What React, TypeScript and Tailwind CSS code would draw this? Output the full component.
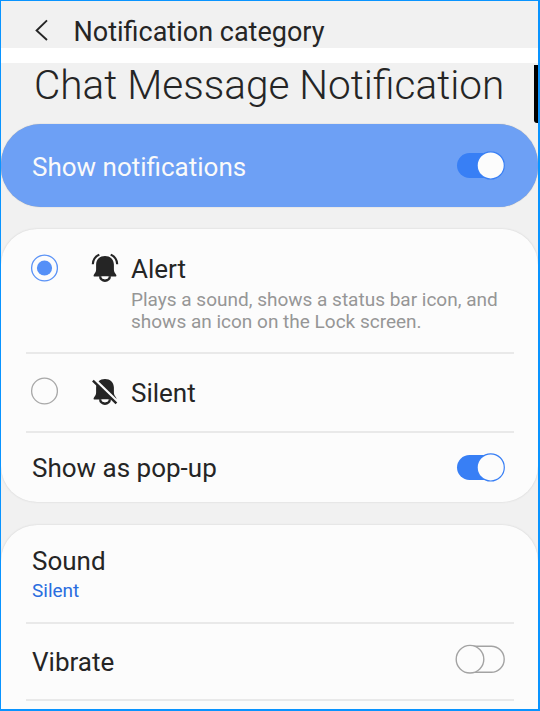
import { useState } from "react";

function Toggle({ on, onClick, label }: { on: boolean; onClick: () => void; label: string }) {
  return (
    <button type="button" role="switch" aria-checked={on} aria-label={label} onClick={onClick} className="block h-[30px] w-[50px]">
      {on ? (
        <svg viewBox="0 0 50 30" className="h-[30px] w-[50px]">
          <rect x="2" y="3" width="46" height="25" rx="12.5" fill="#387ff5" />
          <circle cx="35.7" cy="15.4" r="13.6" fill="#fcfcfc" stroke="#387ff5" strokeWidth="1.2" />
        </svg>
      ) : (
        <svg viewBox="0 0 50 30" className="h-[30px] w-[50px]">
          <rect x="3" y="2.2" width="46.2" height="26" rx="13" fill="#fcfcfc" stroke="#a3a3a3" strokeWidth="1.4" />
          <circle cx="15" cy="15.2" r="13.8" fill="#fcfcfc" stroke="#a3a3a3" strokeWidth="1.4" />
        </svg>
      )}
    </button>
  );
}

function Radio({ on }: { on: boolean }) {
  return (
    <svg viewBox="0 0 28 28" className="h-7 w-7 shrink-0">
      <circle cx="14.5" cy="14" r="12.9" fill="#fcfcfc" stroke={on ? "#5a92f6" : "#a8a8a8"} strokeWidth="1.3" />
      {on && <circle cx="14.5" cy="14" r="7.6" fill="#5590f7" />}
    </svg>
  );
}

function Bell({ muted }: { muted?: boolean }) {
  return (
    <svg viewBox="0 0 28 30" className="h-[30px] w-7 shrink-0" fill="#252525">
      <path d="M14 3C19 3 22.9 6.3 22.9 11.5V16.5C22.9 18.6 23.8 20 25 21.4C25.7 22.2 25.6 23.6 24.2 23.6H3.8C2.4 23.6 2.3 22.2 3 21.4C4.2 20 5.1 18.6 5.1 16.5V11.5C5.1 6.3 9 3 14 3Z" />
      <path d="M8 23.2A6 5.9 0 0 0 20 23.2H17.6Q17.2 26.2 14 26.2Q10.8 26.2 10.4 23.2Z" />
      <path d="M10.4 23.6H17.6Q17.2 26.2 14 26.2Q10.8 26.2 10.4 23.6Z" fill="#fcfcfc" />
      {muted ? (
        <>
          <path d="M2.8 2.9L27.1 26.4" stroke="#fcfcfc" strokeWidth="3" />
          <path d="M1.9 4.6L25.4 27.4" stroke="#252525" strokeWidth="2.4" />
        </>
      ) : (
        <path d="M1.8 11.2Q2 4.6 8.3 1.6M26.2 11.2Q26 4.6 19.7 1.6" fill="none" stroke="#252525" strokeWidth="2.1" />
      )}
    </svg>
  );
}

const divider = "mr-6 ml-[25px] h-0.5 shrink-0 bg-[#e9e9e9]";

export default function App() {
  const [enabled, setEnabled] = useState(true);
  const [alert, setAlert] = useState(true);
  const [popup, setPopup] = useState(true);
  const [vibrate, setVibrate] = useState(false);

  return (
    <div className="flex h-[711px] w-[540px] flex-col overflow-hidden border-t border-r-2 border-b-2 border-l border-[#0994ff] bg-[#f1f1f1] font-['Roboto',sans-serif] text-[#252525]">
      <header className="flex h-[47px] shrink-0 items-start">
        <svg viewBox="0 0 16 24" className="mt-[18px] ml-[33px] h-6 w-4" fill="none" stroke="#252525" strokeWidth="1.9">
          <path d="M13 1.4L2.6 11.5L13 21" />
        </svg>
        <h1 className="mt-[15px] ml-[23.5px] text-[27px] leading-8 whitespace-nowrap">Notification category</h1>
      </header>
      <div className="h-[15px] shrink-0 bg-white" />
      <div className="flex h-[61px] shrink-0 justify-between">
        <h2 className="ml-[33px] text-[40.5px] leading-[45px] font-light whitespace-nowrap">Chat Message Notification</h2>
        <div className="mt-[2px] h-[58px] w-1 rounded-bl-[3px] bg-black" />
      </div>
      <section className="flex h-[83px] shrink-0 items-center justify-between rounded-[40px] bg-[#6da0f5] pr-[33px] pl-[31px] text-[26px] text-[#fafafa] shadow-[0_0_1px_#999]">
        <span className="mt-[3px] whitespace-nowrap">Show notifications</span>
        <div className="mb-[2px]">
          <Toggle on={enabled} onClick={() => setEnabled(!enabled)} label="Show notifications" />
        </div>
      </section>
      <section className="mt-[22px] flex h-[273px] shrink-0 flex-col rounded-[36px] bg-[#fcfcfc] shadow-[0_0_2px_#ccc]">
        <button type="button" onClick={() => setAlert(true)} className="flex h-[123px] shrink-0 items-start pl-[29px] text-left">
          <span className="mt-[25px]"><Radio on={alert} /></span>
          <span className="mt-6 ml-[33px]"><Bell /></span>
          <span className="mt-[25px] ml-[12px] block whitespace-nowrap">
            <span className="block text-[26px] leading-[30px]">Alert</span>
            <span className="mt-[5px] block text-[19px] leading-[22px] text-[#969696]">
              Plays a sound, shows a status bar icon, and<br />shows an icon on the Lock screen.
            </span>
          </span>
        </button>
        <div className={divider} />
        <button type="button" onClick={() => setAlert(false)} className="flex h-[77px] shrink-0 items-center pb-[3px] pl-[29px] text-left">
          <Radio on={!alert} />
          <span className="ml-[33px]"><Bell muted /></span>
          <span className="mt-[3px] ml-[12px] text-[26px] leading-[30px]">Silent</span>
        </button>
        <div className={divider} />
        <div className="flex h-[69px] items-center justify-between pr-[33px] pl-[31px] text-[26px]">
          <span className="mt-0.5">Show as pop-up</span>
          <div className="mb-[2px]">
            <Toggle on={popup} onClick={() => setPopup(!popup)} label="Show as pop-up" />
          </div>
        </div>
      </section>
      <section className="mt-[23px] flex h-[220px] shrink-0 flex-col rounded-t-[36px] bg-[#fcfcfc] shadow-[0_0_2px_#ccc]">
        <div className="h-[97px] shrink-0 pt-[21px] pl-[31px]">
          <div className="text-[26px] leading-[30px]">Sound</div>
          <div className="mt-1 text-[19px] leading-[22px] text-[#2a6ddf]">Silent</div>
        </div>
        <div className={divider} />
        <div className="flex h-[75px] shrink-0 items-center justify-between pr-[33px] pl-[31px] text-[26px]">
          <span className="mt-0.5">Vibrate</span>
          <div className="mb-[5px]">
            <Toggle on={vibrate} onClick={() => setVibrate(!vibrate)} label="Vibrate" />
          </div>
        </div>
        <div className={divider} />
      </section>
    </div>
  );
}
